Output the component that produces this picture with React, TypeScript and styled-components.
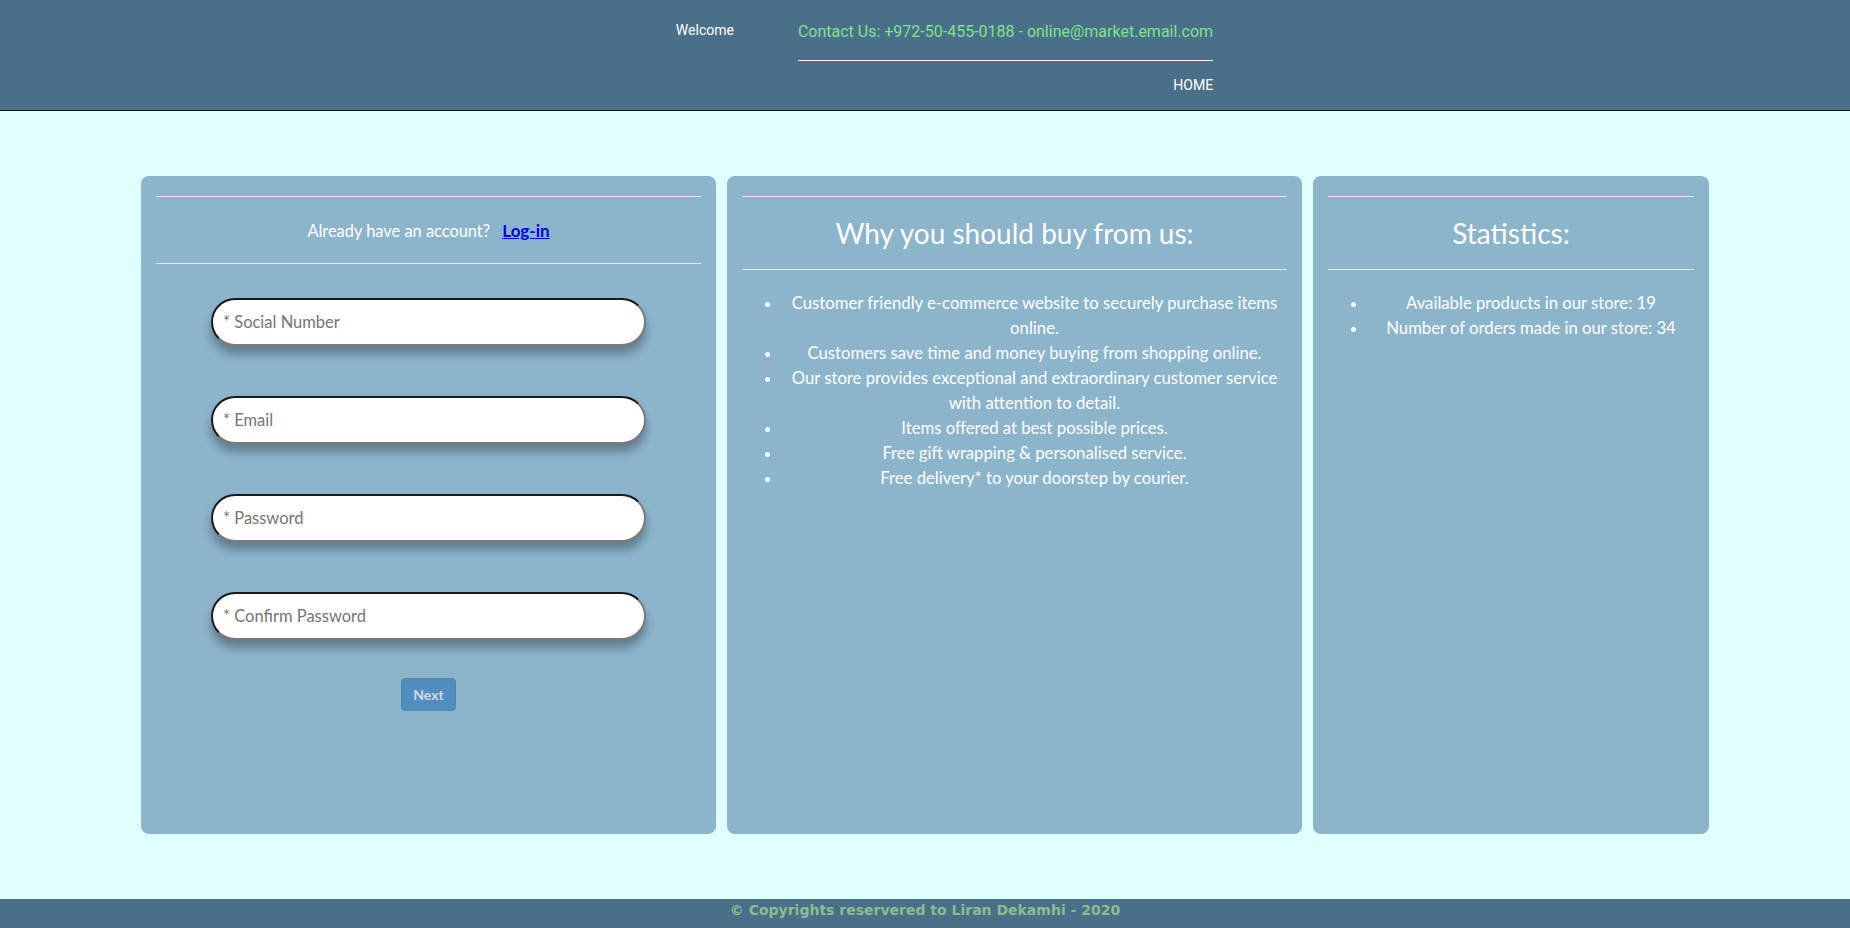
import styled, { createGlobalStyle } from "styled-components";

const GlobalStyle = createGlobalStyle`
    * {
        box-sizing: border-box;
    }
    html, body {
        margin: 0;
        padding: 0;
        background-color: #E0FFFF;
    }
`

const reasons = [
    "Customer friendly e-commerce website to securely purchase items online.",
    "Customers save time and money buying from shopping online.",
    "Our store provides exceptional and extraordinary customer service with attention to detail.",
    "Items offered at best possible prices.",
    "Free gift wrapping & personalised service.",
    "Free delivery* to your doorstep by courier.",
];

const stats = [
    "Available products in our store: 19",
    "Number of orders made in our store: 34",
];

const fields = [
    { name: "social", type: "text", label: "* Social Number" },
    { name: "email", type: "email", label: "* Email" },
    { name: "password", type: "password", label: "* Password" },
    { name: "confirm", type: "password", label: "* Confirm Password" },
];

export default function App() {
    return (
        <>
            <GlobalStyle />
            <Page>
                <TopBar>
                    <Welcome>Welcome</Welcome>
                    <ContactBlock>
                        <Contact>Contact Us: +972-50-455-0188 - online@market.email.com</Contact>
                        <TopRule />
                        <NavLink href="#">HOME</NavLink>
                    </ContactBlock>
                </TopBar>

                <Main>
                    <Card $width={575}>
                        <Rule />
                        <AccountRow>
                            Already have an account? <LoginLink href="#">Log-in</LoginLink>
                        </AccountRow>
                        <Rule />
                        <Form onSubmit={(e) => e.preventDefault()}>
                            {fields.map((f) => (
                                <Input key={f.name} name={f.name} type={f.type} placeholder={f.label} />
                            ))}
                            <NextButton type="submit" disabled>Next</NextButton>
                        </Form>
                    </Card>

                    <Card $width={575}>
                        <Rule />
                        <Title>Why you should buy from us:</Title>
                        <Rule />
                        <List>
                            {reasons.map((r) => <li key={r}>{r}</li>)}
                        </List>
                    </Card>

                    <Card $width={396}>
                        <Rule />
                        <Title>Statistics:</Title>
                        <Rule />
                        <List>
                            {stats.map((s) => <li key={s}>{s}</li>)}
                        </List>
                    </Card>
                </Main>

                <Footer>© Copyrights reservered to Liran Dekamhi - 2020</Footer>
            </Page>
        </>
    )
}

const Page = styled.div`
    min-height: 928px;
    display: flex;
    flex-direction: column;
    background-color: #E0FFFF;
`

const TopBar = styled.header`
    height: 111px;
    background-color: #4A6F89;
    border-bottom: 1px solid #111;
    display: flex;
    justify-content: center;
    gap: 64px;
    padding-left: 39px;
    font-family: Roboto, "Liberation Sans", sans-serif;
`

const Welcome = styled.div`
    color: #FFFFFF;
    font-size: 14px;
    line-height: 16px;
    padding-top: 22px;
`

const ContactBlock = styled.div`
    display: flex;
    flex-direction: column;
    align-items: flex-end;
    padding-top: 22px;
`

const Contact = styled.div`
    color: #7FE38C;
    font-size: 16px;
    line-height: 20px;
`

const TopRule = styled.div`
    align-self: stretch;
    height: 1px;
    background-color: #FFFFFF;
    margin-top: 18px;
`

const NavLink = styled.a`
    color: #FFFFFF;
    text-decoration: none;
    font-size: 14px;
    line-height: 16px;
    margin-top: 16px;
`

const Main = styled.main`
    flex: 1;
    display: flex;
    justify-content: center;
    align-items: flex-start;
    gap: 11px;
    padding: 65px 0;
`

const Card = styled.section<{ $width: number }>`
    width: ${(p) => p.$width}px;
    height: 658px;
    background-color: #8CB4CB;
    border-radius: 8px;
    padding: 20px 15px 0;
    display: flex;
    flex-direction: column;
    color: #FFFFFF;
    font-family: Lato, "Open Sans", sans-serif;
`

const Rule = styled.hr`
    margin: 0;
    border: 0;
    border-top: 1px solid #E6E6E6;
`

const AccountRow = styled.div`
    height: 66px;
    display: flex;
    align-items: center;
    justify-content: center;
    font-size: 16.4px;
    white-space: pre;
`

const LoginLink = styled.a`
    margin-left: 8px;
    color: #0000EE;
    font-weight: 700;
    font-size: 17px;
    text-decoration: underline;
`

const Title = styled.h2`
    margin: 0;
    height: 72px;
    display: flex;
    align-items: center;
    justify-content: center;
    font-size: 28px;
    font-weight: 400;
`

const List = styled.ul`
    margin: 21px 0 0;
    padding-left: 40px;
    font-size: 16.7px;
    line-height: 25px;

    li {
        text-align: center;
    }
`

const Form = styled.form`
    display: flex;
    flex-direction: column;
    align-items: center;
    gap: 50px;
    padding-top: 34px;
`

const Input = styled.input`
    width: 435px;
    height: 48px;
    border-radius: 24px;
    border: 2px solid;
    border-color: #1A1A1A #7A7A7A #7A7A7A #1A1A1A;
    background-color: #FFFFFF;
    box-shadow: 0 8px 10px rgba(0, 0, 0, 0.3);
    padding: 0 10px;
    font-family: Lato, "Open Sans", sans-serif;
    font-size: 16.5px;
    color: #333;
    outline: none;

    &::placeholder {
        color: #757575;
    }
`

const NextButton = styled.button`
    margin-top: -12px;
    width: 55px;
    height: 33px;
    border: 1px solid #2E6DA4;
    border-radius: 4px;
    background-color: #337AB7;
    color: #F0F0F0;
    opacity: 0.65;
    font-family: Lato, "Open Sans", sans-serif;
    font-size: 14px;
    font-weight: 700;
    cursor: not-allowed;
`

const Footer = styled.footer`
    height: 29px;
    background-color: #4A6F89;
    color: #8FBC8F;
    font-family: "DejaVu Sans", sans-serif;
    font-weight: 700;
    font-size: 14px;
    text-align: center;
    line-height: 22px;
`
